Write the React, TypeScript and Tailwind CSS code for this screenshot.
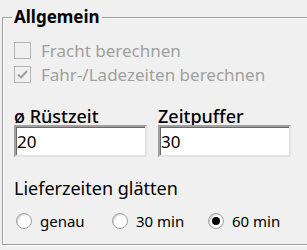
const font = { fontFamily: '"Noto Sans", "DejaVu Sans", sans-serif' };

function DisabledCheck({ checked, label }: { checked?: boolean; label: string }) {
  return (
    <div className="flex items-center h-[24px]">
      <span className="w-[17px] h-[17px] border border-[#b5b5b5] bg-[#f0f0f0] flex items-center justify-center">
        {checked && (
          <svg width="11" height="9" viewBox="0 0 11 9">
            <path d="M1 4.5 L4 7.5 L10 1" fill="none" stroke="#a0a0a0" strokeWidth="2" />
          </svg>
        )}
      </span>
      <span className="ml-[10px] text-[17px] text-[#a0a0a0] leading-none">{label}</span>
    </div>
  );
}

function Radio({ checked, label }: { checked?: boolean; label: string }) {
  return (
    <div className="flex items-center w-[96px]">
      <span className="w-[16px] h-[16px] rounded-full border border-[#a0a0a0] bg-white shadow-[inset_1px_1px_0_#d0d0d0] flex items-center justify-center">
        {checked && <span className="w-[8px] h-[8px] rounded-full bg-black" />}
      </span>
      <span className="ml-[8px] text-[15px] text-black leading-none">{label}</span>
    </div>
  );
}

function Field({ label, value }: { label: string; value: string }) {
  return (
    <div className="flex flex-col w-[133px]">
      <span className="text-[18px] font-medium text-black leading-[20px]">{label}</span>
      <input
        readOnly
        value={value}
        className="mt-[-1px] h-[32px] w-[133px] bg-white border-2 border-t-[#a0a0a0] border-l-[#a0a0a0] border-r-[#e3e3e3] border-b-[#e3e3e3] shadow-[inset_1px_1px_0_#696969] px-[1px] text-[17px] text-black outline-none"
        style={font}
      />
    </div>
  );
}

export default function App() {
  return (
    <div className="w-[307px] h-[250px] bg-[#f0f0f0] pl-[2px] pt-[6px]" style={font}>
      <fieldset className="w-[301px] h-[239px] border border-[#a0a0a0] shadow-[1px_1px_0_#fff,inset_1px_1px_0_#fff] pl-[11px] pr-[10px]">
        <legend className="ml-[-2px] px-[2px] text-[17px] font-bold text-black leading-[22px]">
          Allgemein
        </legend>
        <div className="mt-[10px] flex flex-col">
          <DisabledCheck label="Fracht berechnen" />
          <DisabledCheck checked label="Fahr-/Ladezeiten berechnen" />
        </div>
        <div className="mt-[20px] flex gap-[11px]">
          <Field label="ø Rüstzeit" value="20" />
          <Field label="Zeitpuffer" value="30" />
        </div>
        <div className="mt-[22px] text-[18px] text-black leading-none">Lieferzeiten glätten</div>
        <div className="mt-[16px] flex pl-[2px]">
          <Radio label="genau" />
          <Radio label="30 min" />
          <Radio checked label="60 min" />
        </div>
      </fieldset>
    </div>
  );
}
